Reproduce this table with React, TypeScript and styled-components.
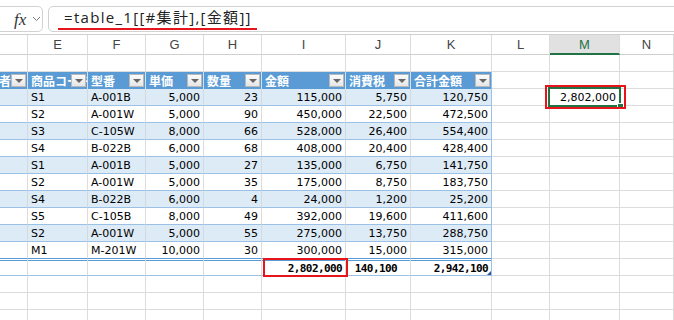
import React from 'react';
import styled, { createGlobalStyle, css } from 'styled-components';

const COLS = '28px 60px 58px 58px 58px 84px 65px 81px 58px 70px 54px';
const GRID = '#dcdcdc';
const BLUE = '#5b9bd5';
const BAND_LINE = '#9bc2e6';
const BAND = '#ddebf7';
const GREEN = '#217346';
const RED = '#e8141b';

const GlobalStyle = createGlobalStyle`
  html, body {
    margin: 0;
    background: #fff;
    overflow: hidden;
  }
`;

const Screen = styled.div`
  width: 674px;
  height: 320px;
  overflow: hidden;
  display: flex;
  flex-direction: column;
  background: #fff;
`;

const TopStrip = styled.div`
  height: 3px;
  background: linear-gradient(#dedede, #eeeeee);
`;

const FormulaBar = styled.div`
  display: flex;
  gap: 5px;
  height: 26px;
  padding: 6px 0 2px;
`;

const FnBox = styled.div`
  width: 49px;
  margin-left: -6px;
  box-sizing: border-box;
  border: 1px solid #d2d2d2;
  border-radius: 5px;
  display: flex;
  align-items: center;
  gap: 6px;
  padding-left: 19px;
`;

const Fx = styled.span`
  font-family: 'Liberation Serif', serif;
  font-style: italic;
  font-size: 17px;
  color: #333;
  line-height: 1;
`;

const FormulaBox = styled.div`
  flex: 1;
  margin-right: -10px;
  border: 1px solid #d2d2d2;
  border-radius: 5px;
  display: flex;
  align-items: flex-end;
  padding: 0 0 0 9px;
`;

const FormulaText = styled.span`
  font-family: 'Open Sans', 'Noto Sans CJK JP', sans-serif;
  font-size: 15px;
  letter-spacing: 1.3px;
  line-height: 21px;
  color: #222;
  padding: 0 5px 0 6px;
  border-bottom: 2px solid ${RED};
  margin-bottom: 1px;
`;

const Sheet = styled.div`
  border-top: 1px solid #d0d0d0;
`;

const Row = styled.div<{ $h: number }>`
  display: grid;
  grid-template-columns: ${COLS};
  height: ${(p) => p.$h}px;
`;

const ColHead = styled.div<{ $active?: boolean }>`
  box-sizing: border-box;
  height: 100%;
  display: flex;
  align-items: center;
  justify-content: center;
  border-right: 1px solid ${GRID};
  border-bottom: 1px solid #cfcfcf;
  font-family: 'Liberation Sans', sans-serif;
  font-size: 13px;
  color: #444;
  background: #fff;
  ${(p) =>
    p.$active &&
    css`
      background: #e1e1e1;
      color: ${GREEN};
      border-bottom: 2px solid ${GREEN};
    `}
`;

type Kind = 'grid' | 'head' | 'band' | 'body' | 'total';

const kinds = {
  grid: css`
    background: #fff;
    border-right: 1px solid ${GRID};
    border-bottom: 1px solid ${GRID};
  `,
  head: css`
    background: ${BLUE};
    color: #fff;
    font-family: 'Noto Sans CJK JP', sans-serif;
    font-weight: 700;
    font-size: 12px;
    overflow: hidden;
    border-right: 1px solid #d4e2f0;
  `,
  band: css`
    background: ${BAND};
    border-right: 1px solid #d3d9e0;
    border-bottom: 1px solid ${BAND_LINE};
  `,
  body: css`
    background: #fff;
    border-right: 1px solid ${GRID};
    border-bottom: 1px solid ${BAND_LINE};
  `,
  total: css`
    background: #fff;
    box-shadow: inset 0 1px 0 #fff, inset 0 2px 0 ${BLUE};
    border-right: 1px solid ${GRID};
    border-bottom: 1px solid ${BAND_LINE};
    font-family: 'DejaVu Sans Mono', monospace;
    font-weight: 700;
    font-size: 11px;
    letter-spacing: -0.6px;
    padding-top: 2px;
  `,
};

const Cell = styled.div<{ $kind: Kind; $right?: boolean; $edge?: boolean; $last?: boolean; $pad?: number }>`
  position: relative;
  box-sizing: border-box;
  height: 100%;
  display: flex;
  align-items: center;
  justify-content: ${(p) => (p.$right ? 'flex-end' : 'flex-start')};
  padding: 0 ${(p) => p.$pad ?? 3}px 0 3px;
  font-family: 'DejaVu Sans', sans-serif;
  font-size: 11px;
  color: #000;
  white-space: nowrap;
  ${(p) => kinds[p.$kind]}
  ${(p) => p.$edge && css`border-right-color: ${BAND_LINE};`}
  ${(p) => p.$last && css`border-bottom-color: ${BLUE};`}
`;

const DropButton = styled.span`
  position: absolute;
  right: 1px;
  top: 2px;
  width: 15px;
  height: 13px;
  box-sizing: border-box;
  border: 1px solid #b9b9b9;
  background: linear-gradient(#fbfbfb, #e6e6e6);
  display: flex;
  align-items: center;
  justify-content: center;
  &::after {
    content: '';
    border-left: 4px solid transparent;
    border-right: 4px solid transparent;
    border-top: 4px solid #666;
  }
`;

const Outline = styled.span<{ $color: string; $t: number; $r: number; $b: number; $l: number }>`
  position: absolute;
  z-index: 3;
  top: ${(p) => p.$t}px;
  right: ${(p) => p.$r}px;
  bottom: ${(p) => p.$b}px;
  left: ${(p) => p.$l}px;
  border: 2px solid ${(p) => p.$color};
  pointer-events: none;
`;

const FillHandle = styled.span`
  position: absolute;
  z-index: 4;
  right: -5px;
  bottom: -5px;
  width: 5px;
  height: 5px;
  background: ${GREEN};
  border: 1px solid #fff;
`;

const ResizeMark = styled.span`
  position: absolute;
  right: 0;
  bottom: 0;
  width: 4px;
  height: 4px;
  background: #2f5597;
  clip-path: polygon(100% 0, 100% 100%, 0 100%);
`;

const letters = ['', 'E', 'F', 'G', 'H', 'I', 'J', 'K', 'L', 'M', 'N'];
const heads = ['担当者', '商品コード', '型番', '単価', '数量', '金額', '消費税', '合計金額'];
const rows = [
  ['S1', 'A-001B', '5,000', '23', '115,000', '5,750', '120,750'],
  ['S2', 'A-001W', '5,000', '90', '450,000', '22,500', '472,500'],
  ['S3', 'C-105W', '8,000', '66', '528,000', '26,400', '554,400'],
  ['S4', 'B-022B', '6,000', '68', '408,000', '20,400', '428,400'],
  ['S1', 'A-001B', '5,000', '27', '135,000', '6,750', '141,750'],
  ['S2', 'A-001W', '5,000', '35', '175,000', '8,750', '183,750'],
  ['S4', 'B-022B', '6,000', '4', '24,000', '1,200', '25,200'],
  ['S5', 'C-105B', '8,000', '49', '392,000', '19,600', '411,600'],
  ['S2', 'A-001W', '5,000', '55', '275,000', '13,750', '288,750'],
  ['M1', 'M-201W', '10,000', '30', '300,000', '15,000', '315,000'],
];

const Outside = () => (
  <>
    <Cell $kind="grid" />
    <Cell $kind="grid" />
    <Cell $kind="grid" />
  </>
);

const BlankRow = () => (
  <Row $h={17}>
    {letters.map((l, i) => (
      <Cell key={i} $kind="grid" />
    ))}
  </Row>
);

export default function App() {
  return (
    <Screen>
      <GlobalStyle />
      <TopStrip />
      <FormulaBar>
        <FnBox>
          <Fx>fx</Fx>
          <svg width="9" height="6" viewBox="0 0 9 6">
            <path d="M1 1l3.5 3.5L8 1" fill="none" stroke="#777" strokeWidth="1" />
          </svg>
        </FnBox>
        <FormulaBox>
          <FormulaText>=table_1[[#集計],[金額]]</FormulaText>
        </FormulaBox>
      </FormulaBar>

      <Sheet>
        <Row $h={20}>
          {letters.map((l) => (
            <ColHead key={l} $active={l === 'M'}>
              {l}
            </ColHead>
          ))}
        </Row>
        <BlankRow />

        <Row $h={17}>
          {heads.map((h, i) => (
            <Cell key={h} $kind="head" $right={i === 0} $pad={i === 0 ? 16 : 3} $edge={i === 7}>
              {h}
              <DropButton />
            </Cell>
          ))}
          <Outside />
        </Row>

        {rows.map((r, ri) => {
          const kind: Kind = ri % 2 === 0 ? 'band' : 'body';
          const last = ri === rows.length - 1;
          return (
            <Row $h={17} key={ri}>
              <Cell $kind={kind} $last={last} />
              {r.map((v, ci) => (
                <Cell key={ci} $kind={kind} $right={ci > 1} $edge={ci === 6} $last={last}>
                  {v}
                </Cell>
              ))}
              <Cell $kind="grid" />
              <Cell $kind="grid" $right>
                {ri === 0 && (
                  <>
                    2,802,000
                    <Outline $color={GREEN} $t={-2} $r={-2} $b={-2} $l={-2}>
                      <FillHandle />
                    </Outline>
                    <Outline $color={RED} $t={-4} $r={-7} $b={-4} $l={-5} />
                  </>
                )}
              </Cell>
              <Cell $kind="grid" />
            </Row>
          );
        })}

        <Row $h={17}>
          <Cell $kind="total" />
          <Cell $kind="total" />
          <Cell $kind="total" />
          <Cell $kind="total" />
          <Cell $kind="total" />
          <Cell $kind="total" $right>
            2,802,000
            <Outline $color={RED} $t={-1} $r={-3} $b={-2} $l={1} />
          </Cell>
          <Cell $kind="total" $right $pad={13}>
            140,100
          </Cell>
          <Cell $kind="total" $right $edge>
            2,942,100
            <ResizeMark />
          </Cell>
          <Outside />
        </Row>
        <BlankRow />
        <BlankRow />
        <BlankRow />
      </Sheet>
    </Screen>
  );
}
